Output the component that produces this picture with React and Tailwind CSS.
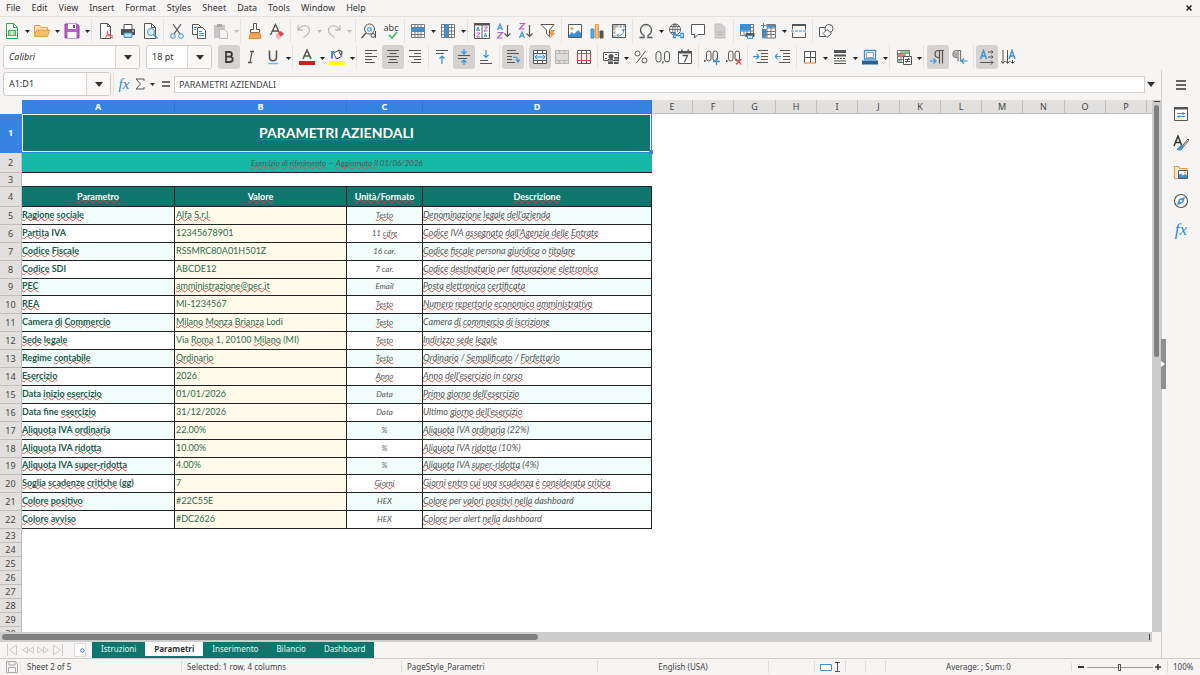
import { useState } from "react";

const menus = ["File", "Edit", "View", "Insert", "Format", "Styles", "Sheet", "Data", "Tools", "Window", "Help"];

const columns = [
  { name: "A", width: 153 },
  { name: "B", width: 172 },
  { name: "C", width: 76 },
  { name: "D", width: 229 },
  { name: "E", width: 41 },
  { name: "F", width: 41 },
  { name: "G", width: 42 },
  { name: "H", width: 41 },
  { name: "I", width: 41 },
  { name: "J", width: 42 },
  { name: "K", width: 41 },
  { name: "L", width: 41 },
  { name: "M", width: 41 },
  { name: "N", width: 42 },
  { name: "O", width: 41 },
  { name: "P", width: 41 },
];

// A leading ~ marks a word that the spell checker underlines
const rows = [
  ["~Ragione ~sociale", "~Alfa ~S.r.l.", "~Testo", "~Denominazione ~legale ~dell'azienda"],
  ["~Partita IVA", "12345678901", "11 ~cifre", "~Codice IVA ~assegnato ~dall'Agenzia ~delle ~Entrate"],
  ["~Codice ~Fiscale", "RSSMRC80A01H501Z", "16 car.", "~Codice ~fiscale persona ~giuridica o ~titolare"],
  ["~Codice SDI", "ABCDE12", "7 car.", "~Codice ~destinatario per ~fatturazione ~elettronica"],
  ["~PEC", "~amministrazione@pec.it", "Email", "~Posta ~elettronica ~certificata"],
  ["~REA", "MI-1234567", "~Testo", "~Numero ~repertorio ~economico ~amministrativo"],
  ["Camera ~di ~Commercio", "~Milano ~Monza ~Brianza Lodi", "~Testo", "Camera ~di ~commercio ~di ~iscrizione"],
  ["~Sede ~legale", "Via ~Roma 1, 20100 ~Milano (MI)", "~Testo", "~Indirizzo ~sede ~legale"],
  ["Regime ~contabile", "~Ordinario", "~Testo", "~Ordinario / ~Semplificato / ~Forfettario"],
  ["~Esercizio", "2026", "~Anno", "~Anno ~dell'esercizio in ~corso"],
  ["Data ~inizio ~esercizio", "01/01/2026", "Data", "~Primo ~giorno ~dell'esercizio"],
  ["Data fine ~esercizio", "31/12/2026", "Data", "Ultimo ~giorno ~dell'esercizio"],
  ["~Aliquota IVA ~ordinaria", "22.00%", "%", "~Aliquota IVA ~ordinaria (22%)"],
  ["~Aliquota IVA ~ridotta", "10.00%", "%", "~Aliquota IVA ~ridotta (10%)"],
  ["~Aliquota IVA ~super-ridotta", "4.00%", "%", "~Aliquota IVA ~super-ridotta (4%)"],
  ["~Soglia ~scadenze ~critiche (gg)", "7", "~Giorni", "~Giorni ~entro ~cui ~una ~scadenza ~è ~considerata ~critica"],
  ["~Colore ~positivo", "#22C55E", "HEX", "~Colore per ~valori ~positivi ~nella dashboard"],
  ["~Colore ~avviso", "#DC2626", "HEX", "~Colore per alert ~nella dashboard"],
];

const dataRowHeights = [18, 18, 18, 18, 17, 18, 18, 18, 18, 18, 18, 18, 18, 18, 17, 18, 18, 18];
const emptyRows = [23, 24, 25, 26, 27, 28, 29, 30];

const G = "#555555";
const B = "#3a92d4";
const M = "#b55bc4";
const R = "#e0474c";
const O = "#ed9a45";

const icons = {
  newDoc: (
    <>
      <path d="M2.5 .5h7l4 4v11h-11z" fill="#fff" stroke="#2fa84f" />
      <path d="M9.5 .5v4h4" fill="none" stroke="#2fa84f" />
      <path d="M4 7h8v6H4z" fill="#3cb45c" />
      <path d="M5 9h6M5 11h6M8 8v4" stroke="#fff" />
    </>
  ),
  open: (
    <>
      <path d="M.5 13.5v-11h5l1.5 2h6.500v3" fill="#fbe3c0" stroke={O} />
      <path d="M.5 13.500l2-6.500h13l-2 6.500z" fill="#f7bd78" stroke={O} />
    </>
  ),
  save: (
    <>
      <path d="M1 1h12l2 2v12H1z" fill="#b660c8" stroke="#8f3fa4" />
      <path d="M4 1h8v5H4zM3.500 9h9v6h-9z" fill="#fff" />
      <path d="M9 2h2v3H9z" fill="#8f3fa4" />
    </>
  ),
  pdf: (
    <>
      <path d="M2.5 .5h7l3 3v12h-10z" fill="#fff" stroke={G} />
      <path d="M9.5 .5v3h3" fill="none" stroke={G} />
      <path d="M7 15c2-2 3-5 2.500-7M8 13.500c2-2 5-2 7-.5M9 9c1 3 3 5 6 6" fill="none" stroke={R} />
    </>
  ),
  print: (
    <>
      <path d="M4 1.500h8v5H4z" fill="#fff" stroke={G} />
      <path d="M1 6h14v6H1z" fill="#4f5357" />
      <path d="M4 10h8v4.500H4z" fill="#bfe0f5" stroke={B} />
      <path d="M12 8h2" stroke="#fff" />
    </>
  ),
  preview: (
    <>
      <path d="M2.500 .5h7l4 4v11h-11z" fill="#fff" stroke={G} />
      <path d="M9.500 .5v4h4" fill="none" stroke={G} />
      <circle cx="9" cy="9" r="3.500" fill="#d9edf9" stroke={B} />
      <path d="M11.500 11.500l4 4" stroke={B} strokeWidth="1.500" />
    </>
  ),
  cut: (
    <>
      <path d="M4 1l7 10M12 1L5 11" fill="none" stroke={G} strokeWidth="1.300" />
      <circle cx="4" cy="13" r="2.300" fill="none" stroke={B} />
      <circle cx="12" cy="13" r="2.300" fill="none" stroke={B} />
    </>
  ),
  copy: (
    <>
      <path d="M1.500 1.500h6l3 3v7h-9z" fill="#fff" stroke={G} />
      <path d="M6.500 4.500h5l3 3v8h-8z" fill="#fff" stroke={G} />
      <path d="M3 4.500h3M3 6.500h2M8 8.500h3M8 10.500h5M8 12.500h5" stroke={B} />
    </>
  ),
  paste: (
    <>
      <path d="M1 2h11v13H1z" fill="#c9c8c6" />
      <path d="M4 1h5v3H4z" fill="#aaa" />
      <path d="M6.500 6.500h5l3 3v6h-8z" fill="#f4f4f4" stroke="#bbb" />
    </>
  ),
  brush: (
    <>
      <path d="M6.500 .5h3v6h3v3h-9v-3h3z" fill="#fff" stroke={G} />
      <path d="M3.500 10h9.500l1 5.500H2z" fill="#f3a659" stroke="#e58c33" />
    </>
  ),
  clear: (
    <>
      <path d="M1.500 12L6.500 1.500 11 11M3.500 8h6" fill="none" stroke={G} strokeWidth="1.400" />
      <path d="M7 12l5-4 3 3-5 4.500H8z" fill={R} />
      <path d="M7 12l2-1.500 3 3-2 2H8z" fill="#f7b6b8" />
    </>
  ),
  undo: <path d="M2 2v5h5M2.500 6.500c3-5 11-5 11 1 0 3-3 5-6 7" fill="none" stroke="#bdbcba" strokeWidth="1.300" />,
  redo: <path d="M14 2v5H9M13.500 6.500c-3-5-11-5-11 1 0 3 3 5 6 7" fill="none" stroke="#bdbcba" strokeWidth="1.300" />,
  find: (
    <>
      <circle cx="8.500" cy="6" r="5" fill="#eef7fc" stroke={G} />
      <path d="M5 10l-4.500 5" stroke={G} strokeWidth="1.400" />
      <circle cx="8" cy="6.500" r="1.700" fill="none" stroke={B} />
      <path d="M10 4.500V8.500" stroke={B} />
      <circle cx="12" cy="12.500" r="2" fill="none" stroke={G} />
      <path d="M14.500 8v7" stroke={G} />
    </>
  ),
  tableRow: (
    <>
      <path d="M1.500 1.500h13v13h-13z" fill="#fff" />
      <path d="M1.500 1.500h13v13h-13zM1.500 4.500h13M1.500 8.500h13M1.500 11.500h13M5 1.500v13M8 1.500v13M11 1.500v13" fill="none" stroke="#777" />
      <path d="M1 5h14v3.500H1z" fill={B} />
    </>
  ),
  tableCol: (
    <>
      <path d="M1.500 1.500h13v13h-13z" fill="#fff" />
      <path d="M1.500 1.500h13v13h-13zM1.500 4.500h13M1.500 8h13M1.500 11.500h13M4.500 1.500v13M8.500 1.500v13M11.500 1.500v13" fill="none" stroke="#777" />
      <path d="M5 1h3.500v14H5z" fill={B} />
    </>
  ),
  sort: (
    <>
      <path d="M.5 .5h15v15H.5zM8 .5v15" fill="#fff" stroke={G} />
      <path d="M0 0h16v2.500H0z" fill={G} />
      <path d="M2.500 8l1.500-4 1.500 4M3 7h2M10 14l1.500-4 1.500 4M10.500 13h2" fill="none" stroke={B} />
      <path d="M2.500 10H6l-3.500 4H6M10 4h3.500L10 8h3.500" fill="none" stroke={M} />
    </>
  ),
  sortAsc: (
    <>
      <path d="M1.500 7L4 1l2.500 6M2.500 5h3" fill="none" stroke={B} strokeWidth="1.200" />
      <path d="M1.500 9.500h5l-5 5.500h5" fill="none" stroke={M} strokeWidth="1.200" />
      <path d="M11.500 2v11M8.500 10.500l3 3 3-3" fill="none" stroke={G} strokeWidth="1.200" />
    </>
  ),
  sortDesc: (
    <>
      <path d="M1.500 .5h5l-5 5.500h5" fill="none" stroke={M} strokeWidth="1.200" />
      <path d="M1.500 15L4 9l2.500 6M2.500 13h3" fill="none" stroke={B} strokeWidth="1.200" />
      <path d="M11.500 2v11M8.500 10.500l3 3 3-3" fill="none" stroke={G} strokeWidth="1.200" />
    </>
  ),
  filter: (
    <>
      <path d="M1 1.500h13L9.500 7v6.500l-3-2.500V7z" fill="#fff" stroke={G} />
      <path d="M11 7h4l-2 3h2.500L9 16l2-4.500H9z" fill={O} />
    </>
  ),
  image: (
    <>
      <path d="M1.500 1.500h13v13h-13z" fill="#fff" stroke={G} />
      <circle cx="5" cy="5.500" r="1.500" fill={O} />
      <path d="M2 14v-2l3-3 2 2 4-4 3 3v4z" fill={B} />
    </>
  ),
  chart: (
    <>
      <path d="M2 6h3v9H2z" fill="#5aaade" stroke={B} />
      <path d="M6.500 1.500h3v13.500h-3z" fill="#f6c07a" stroke={O} />
      <path d="M11 8h3v7h-3z" fill={G} stroke={G} />
    </>
  ),
  pivot: (
    <>
      <path d="M1 1h14v3.500H1zM1 1h3.500v14H1z" fill="#b5b5b5" />
      <path d="M5 5h9.500v9.500H5z" fill="#fff" />
      <path d="M1.500 8h3M1.500 11.500h3M8 1.500v3M11.500 1.500v3" stroke="#fff" />
      <path d="M1.500 1.500h13v13h-13z" fill="none" stroke={G} />
      <path d="M6 12.500c4 1 7-2 6.500-6M11 8l1.500-2 2 1.500M8 10.500l-2 2 2 2" fill="none" stroke={B} />
    </>
  ),
  omega: <path d="M1.500 14.500H6v-2C3.500 11 2.500 9 2.500 7a5.500 5.500 0 0111 0c0 2-1 4-3.500 5.500v2h4.500" fill="none" stroke={G} strokeWidth="1.300" />,
  link: (
    <>
      <circle cx="7" cy="6.500" r="5.500" fill="#fff" stroke={G} />
      <path d="M1.500 6.500h11M2.500 3.500h9M2.500 9.500h5M7 1v9M7 1c-3 2-3 8-1 10M7 1c3 2 3 5 2.500 8" fill="none" stroke={G} strokeWidth=".8" />
      <path d="M8 10.500H5.500v4H8M12 10.500h3.500v4H12M7.500 12.500h6" fill="none" stroke={B} strokeWidth="1.300" />
    </>
  ),
  comment: <path d="M1.500 1.500h13v10H8l-3.500 3.500v-3.500h-3z" fill="#fff" stroke={G} />,
  note: (
    <>
      <path d="M3 1h6.500L13 4.500V15H3z" fill="#d0cfcd" stroke="#c4c3c1" />
      <path d="M5 9h6M5 11.500h6" stroke="#b4b4b4" />
    </>
  ),
  printRange: (
    <>
      <path d="M1.500 1.500h13v12h-13z" fill="#fff" />
      <path d="M1.500 1.500h13v11h-13zM1.500 4.500h13M1.500 8h13M5 1.500v11M8 1.500v11M11.500 1.500v11" fill="none" stroke="#777" />
      <path d="M1 1h10v3H1zM1 5h10v2.500H1z" fill={B} />
      <path d="M6.500 10h9v4h-9z" fill={G} />
      <path d="M8.500 12.500h5v3h-5z" fill="#cfe7f6" stroke={B} />
    </>
  ),
  freeze: (
    <>
      <path d="M1.500 3.500h13v12h-13z" fill="#fff" />
      <path d="M1.500 5.500v9.500h13V1.500h-9M1.500 8.500h13M1.500 11.500h13M6 1.500v13.500M10 1.500v13.500M6 5h8.500" fill="none" stroke="#777" />
      <path d="M6 2h8v2.500H6zM2 6h3.500v2H2zM2 9h3.500v2H2zM2 12h3.500v2.500H2z" fill={B} />
      <path d="M2.500 0v5M0 2.500h5" stroke={B} />
    </>
  ),
  split: (
    <>
      <path d="M1.500 1.500h13v5M1.500 1.500v5M1.500 9.500v5h13v-5" fill="none" stroke={G} />
      <path d="M1 1h14v2H1z" fill={G} />
      <path d="M0 8h16" stroke={B} strokeDasharray="3 1" />
    </>
  ),
  shapes: (
    <>
      <path d="M1.500 4.500h8v9h-8z" fill="#fff" stroke={G} />
      <circle cx="11" cy="5.500" r="4" fill="#fff" stroke={G} />
      <path d="M9 6.500l4.500 4-4.500 4-4-4z" fill="#fff" stroke={G} />
    </>
  ),
  bold: <path d="M5 3h3.500a2.300 2.300 0 010 4.700H5zM5 7.700h4a2.600 2.600 0 010 5.300H5z" fill="none" stroke="#3a3a3a" strokeWidth="1.800" />,
  italic: <path d="M7 2.500h4M5 13.500h4M9 2.500L7 13.500" fill="none" stroke={G} strokeWidth="1.300" />,
  underline: (
    <>
      <path d="M4.500 1.500v6.500c0 5 7 5 7 0V1.500" fill="none" stroke={G} strokeWidth="1.600" />
      <path d="M3 14.500h10" stroke="#7fb8e4" strokeWidth="1.500" />
    </>
  ),
  fontColor: (
    <>
      <path d="M4 10L8 1l4 9M5.500 7h5" fill="none" stroke={G} strokeWidth="1.600" />
      <path d="M0 12h16v4H0z" fill="#c9211e" />
    </>
  ),
  highlight: (
    <>
      <path d="M4.500 4l5-2.500 3 6-5 2.500z" fill="#fff" stroke={G} />
      <path d="M2 9.500V2h4L4 4v5.500z" fill={B} />
      <path d="M9 1l4 1.500-.5 4" fill="none" stroke={G} strokeWidth="1.200" />
      <path d="M0 12h16v4H0z" fill="#ffff00" />
    </>
  ),
  left: <path d="M2 1.500h12M2 4.500h7M2 7.500h12M2 10.500h7M2 13.500h10" stroke={G} />,
  center: <path d="M2 1.500h12M4.500 4.500h7M2 7.500h12M4.500 10.500h7M3 13.500h10" stroke={G} />,
  right: <path d="M2 1.500h12M7 4.500h7M2 7.500h12M7 10.500h7M4 13.500h10" stroke={G} />,
  top: (
    <>
      <path d="M2 1.500h12M2 4.500h8" stroke={G} />
      <path d="M8 15V7M5.500 9.500L8 7l2.500 2.500" fill="none" stroke={B} strokeWidth="1.200" />
    </>
  ),
  middle: (
    <>
      <path d="M2 6.500h12M2 9.500h9" stroke={G} />
      <path d="M8 0v5M5.500 2.500L8 5l2.500-2.500M8 16v-5M5.500 13.500L8 11l2.500 2.500" fill="none" stroke={B} strokeWidth="1.200" />
    </>
  ),
  bottom: (
    <>
      <path d="M2 11.500h8M2 14.500h12" stroke={G} />
      <path d="M8 1v7M5.500 6L8 8.500 10.500 6" fill="none" stroke={B} strokeWidth="1.200" />
    </>
  ),
  wrap: (
    <>
      <path d="M2 1.500h9M2 4.500h12M2 7.500h5M2 10.500h5M2 13.500h8" stroke={G} />
      <path d="M8 8.500c3-1 5 0 5 4M11 10.500l2 2.500 2-2.500" fill="none" stroke={B} strokeWidth="1.200" />
    </>
  ),
  merge: (
    <>
      <path d="M1.500 1.500h13v13h-13z" fill="#fff" />
      <path d="M1 5h14v6H1z" fill="#d5eaf8" />
      <path d="M1.500 1.500h13v13h-13zM1.500 4.500h13M1.500 11.500h13M5.500 1.500v3M10.500 1.500v3M5.500 11.500v3M10.500 11.500v3" fill="none" stroke={G} />
      <path d="M3 8h10M5 6L3 8l2 2M11 6l2 2-2 2" fill="none" stroke={B} />
    </>
  ),
  mergeOff: <path d="M1.500 1.500h13v13h-13zM1.500 4.500h13M1.500 11.500h13M5.500 1.500v3M10.500 1.500v3M5.500 11.500v3M10.500 11.500v3" fill="#dddcda" stroke="#b5b4b2" />,
  unmerge: (
    <>
      <path d="M1.500 1.500h13v13h-13zM1.500 4.500h13M1.500 11.500h13M5.500 1.500v13M10.500 1.500v13" fill="#fff" stroke={G} />
      <path d="M1 4.500h14M1 11.500h14M1.500 5v6M5.500 5v6M10.500 5v6M14.500 5v6" stroke={R} strokeWidth="1.200" />
    </>
  ),
  currency: (
    <>
      <path d="M.5 3.500h15v8H.5z" fill="#fff" stroke={G} />
      <circle cx="8" cy="7.500" r="2.500" fill={G} />
      <path d="M2 5.500h2M12 5.500h2M2 9.500h2" stroke={G} />
      <path d="M5 10h5v5H5zM11 8h4.500v7H11z" fill={G} />
      <path d="M5 12h5M11 10h4M11 12.500h4" stroke="#ddd" />
    </>
  ),
  percent: (
    <>
      <circle cx="4.500" cy="4.500" r="2.500" fill="none" stroke={G} />
      <circle cx="11.500" cy="11.500" r="2.500" fill="none" stroke={G} />
      <path d="M12.500 2L3.500 14" stroke={G} />
    </>
  ),
  decimal: (
    <>
      <rect x="1" y="2.500" width="5" height="10.500" rx="2.500" fill="none" stroke={G} />
      <rect x="9.500" y="2.500" width="5" height="10.500" rx="2.500" fill="none" stroke={G} />
      <path d="M7.200 12h1.300v2.500H7.200z" fill={G} />
    </>
  ),
  date: (
    <>
      <path d="M1.500 2.500h13v12h-13z" fill="#fff" stroke={G} />
      <path d="M1 2h14v2.500H1zM4 .5h1.500V3H4zM10.500 .5H12V3h-1.500z" fill={G} />
      <path d="M5.500 6.500h5l-3 6.500" fill="none" stroke={G} strokeWidth="1.300" />
    </>
  ),
  addDecimal: (
    <>
      <rect x="2.500" y="2" width="4.500" height="10" rx="2.200" fill="none" stroke={G} />
      <rect x="9" y="2" width="4.500" height="10" rx="2.200" fill="none" stroke={G} />
      <path d="M0 11h1.500v2H0z" fill={G} />
      <path d="M12.500 9v7M9 12.500h7" stroke={B} strokeWidth="1.300" />
    </>
  ),
  delDecimal: (
    <>
      <rect x="2.500" y="2" width="4.500" height="10" rx="2.200" fill="none" stroke={G} />
      <rect x="9" y="2" width="4.500" height="10" rx="2.200" fill="none" stroke={G} />
      <path d="M0 11h1.500v2H0z" fill={G} />
      <path d="M10 10l5.500 5.500M15.500 10L10 15.500" stroke={R} strokeWidth="1.300" />
    </>
  ),
  indent: (
    <>
      <path d="M5 1.500h10M8 4.500h7M8 7.500h7M8 10.500h7M4 13.500h11" stroke={G} />
      <path d="M0 7.500h6M3.500 5L6 7.500 3.500 10" fill="none" stroke={B} strokeWidth="1.200" />
    </>
  ),
  outdent: (
    <>
      <path d="M5 1.500h10M8 4.500h7M8 7.500h7M8 10.500h7M4 13.500h11" stroke={G} />
      <path d="M6 7.500H0M2.500 5L0 7.500 2.500 10" fill="none" stroke={B} strokeWidth="1.200" />
    </>
  ),
  borders: (
    <>
      <path d="M2 2.500h12v11.500H2z" fill="#fff" />
      <path d="M2 2.500h12M2.500 2v12M13.500 2v12M8.500 2v12M2 8.500h12" fill="none" stroke={G} />
      <path d="M2 14h12" stroke={O} strokeWidth="1.300" />
    </>
  ),
  lineStyle: (
    <>
      <path d="M2 2.500h12" stroke={G} strokeWidth="3" />
      <path d="M2 6.500h12" stroke={G} strokeWidth="2" />
      <path d="M2 9.500h12" stroke={G} strokeDasharray="2 1" />
      <path d="M2 12h12M2 14.500h12" stroke={G} />
    </>
  ),
  frameColor: (
    <>
      <path d="M2.500 1.500h11v8.500h-11z" fill="#fff" stroke={B} strokeWidth="1.300" />
      <path d="M4.500 3.500h7v5h-7z" fill="none" stroke="#999" />
      <path d="M0 11.500h16v4H0z" fill="#2a6099" />
    </>
  ),
  conditional: (
    <>
      <path d="M1.500 1.500h12v12h-12z" fill="#fff" />
      <path d="M1.500 1.500h12v12h-12zM1.500 4.500h12M1.500 7.500h12M1.500 10.500h12M5 1.500v12M9 1.500v12" fill="none" stroke="#777" />
      <path d="M5.500 2H13v2.500H5.500zM2 11h3v2H2z" fill="#7fcf8d" />
      <path d="M2 5h7v2.500H2z" fill="#ef7b7d" />
      <path d="M7.500 7.500h8v8h-8z" fill="#fff" stroke={G} />
      <path d="M9 10.500h5M9 12.500h5M13 9l-3 5" stroke={G} />
    </>
  ),
  ltr: (
    <>
      <path d="M14 1.500H8.500a3.500 3.500 0 000 7H9M9.500 1.500v13M12.500 1.500v13" fill="none" stroke={G} strokeWidth="1.200" />
      <path d="M0 12h6M3.500 9.500L6 12l-2.500 2.500" fill="none" stroke={B} strokeWidth="1.200" />
    </>
  ),
  rtl: (
    <>
      <path d="M9 1.500H4.500a3.500 3.500 0 000 7H5M6 1.500v11M8.500 1.500v11" fill="none" stroke="#777" strokeWidth="1.200" />
      <path d="M1.500 3h4v5h-3z" fill="#aaa" />
      <path d="M15.500 12h-6M12 9.500L9.500 12l2.500 2.500" fill="none" stroke={B} strokeWidth="1.200" />
    </>
  ),
  textH: (
    <>
      <path d="M1.500 10L4.500 1.500 7.500 10M2.500 7h4" fill="none" stroke={B} strokeWidth="1.400" />
      <path d="M9 3h5M9 8h5M1 13.500h13M12.500 1.500L14 3l-1.500 1.500M12.500 6.500L14 8l-1.500 1.500M12 11.500l2 2-2 2" fill="none" stroke={G} />
    </>
  ),
  textV: (
    <>
      <path d="M8 10L11 1.500 14 10M9 7h4" fill="none" stroke={B} strokeWidth="1.400" />
      <path d="M2 1v13M6.500 1v13M0 12l2 2.500L4 12M4.500 12l2 2.500 2-2.500M11.500 11v3M9.500 12.500l2 2 2-2" fill="none" stroke={G} />
    </>
  ),
  properties: (
    <>
      <path d="M1.500 1.500h13v13h-13z" fill="#fff" stroke={G} />
      <path d="M1 1h14v2.500H1z" fill={G} />
      <path d="M4 7.500h8M4 10.500h8M10 6v3M6 9v3" stroke={B} />
    </>
  ),
  styles: (
    <>
      <path d="M1 11L5 1l3.500 9M2.500 7.500h5" fill="none" stroke="#333" strokeWidth="1.500" />
      <path d="M15 4l-5 6-1 2 2-1 5-6z" fill="#fff" stroke={G} />
      <path d="M4 14c2 0 2-3.500 5-3.500l1 1.500c0 3-4 4-6 2z" fill={B} stroke={B} />
    </>
  ),
  gallery: (
    <>
      <path d="M1.500 14.500v-12h4l1.500 2h7v3" fill="#fdebd3" stroke={O} strokeWidth="1.200" />
      <path d="M1.500 14.500h4" stroke={O} strokeWidth="1.200" />
      <path d="M5.500 6.500h9v8h-9z" fill="#fff" stroke={G} />
      <circle cx="12" cy="8.500" r="1" fill={O} />
      <path d="M6 14v-3l2-1.500 2 2 2-1.500 2 1.500v2.500z" fill={B} />
    </>
  ),
  navigator: (
    <>
      <circle cx="8" cy="8" r="6.500" fill="#fff" stroke={G} strokeWidth="1.200" />
      <path d="M12 4l-2 6-6 2 2-6z" fill={B} />
      <circle cx="8" cy="8" r="1.200" fill="#fff" />
    </>
  ),
};

const standardBar = [
  ["newDoc", "New", "menu"], ["open", "Open", "menu"], ["save", "Save", "menu"], "tight",
  ["pdf", "Export as PDF"], ["print", "Print"], ["preview", "Print Preview"], "sep",
  ["cut", "Cut"], ["copy", "Copy"], ["paste", "Paste", "menuOff"], "tight",
  ["brush", "Clone Formatting"], ["clear", "Clear Formatting"], "sep",
  ["undo", "Undo", "menuOff"], ["redo", "Redo", "menuOff"], "sep",
  ["find", "Find and Replace"], ["spell", "Spelling"], "sep",
  ["tableRow", "Row", "menu"], ["tableCol", "Column", "menu"], "tight",
  ["sort", "Sort"], ["sortAsc", "Sort Ascending"], ["sortDesc", "Sort Descending"], ["filter", "AutoFilter"], "sep",
  ["image", "Insert Image"], ["chart", "Insert Chart"], ["pivot", "Pivot Table"], "sep",
  ["omega", "Special Character", "menu"], ["link", "Hyperlink"], ["comment", "Comment"], ["note", "Headers and Footers"], "sep",
  ["printRange", "Print Area"], ["freeze", "Freeze", "menu"], ["split", "Split Window"], "sep",
  ["shapes", "Draw Functions"],
];

const formatBar = [
  ["bold", "Bold", "", true], ["italic", "Italic"], ["underline", "Underline", "menu"], "tight",
  ["fontColor", "Font Color", "menu"], ["highlight", "Background Color", "menu"], "tight",
  ["left", "Align Left"], ["center", "Center Horizontally", "", true], ["right", "Align Right"], "sep",
  ["top", "Align Top"], ["middle", "Center Vertically", "", true], ["bottom", "Align Bottom"], "sep",
  ["wrap", "Wrap Text", "", true], "sep",
  ["merge", "Merge and Center", "", true], ["mergeOff", "Merge Cells"], ["unmerge", "Unmerge Cells"], "sep",
  ["currency", "Currency", "menu"], ["percent", "Percent"], ["decimal", "Number"], ["date", "Date"], "sep",
  ["addDecimal", "Add Decimal Place"], ["delDecimal", "Delete Decimal Place"], "sep",
  ["indent", "Increase Indent"], ["outdent", "Decrease Indent"], "sep",
  ["borders", "Borders", "menu"], ["lineStyle", "Border Style", "menu"], ["frameColor", "Border Color", "menu"], "tight",
  ["conditional", "Conditional", "menu"], "tight",
  ["ltr", "Left-To-Right", "", true], ["rtl", "Right-To-Left"], "sep",
  ["textH", "Text Horizontal", "", true], ["textV", "Text Vertical"],
];

const sheets = ["Istruzioni", "Parametri", "Inserimento", "Bilancio", "Dashboard"];

const sideItems = [["properties", "Properties"], ["styles", "Styles"], ["gallery", "Gallery"], ["navigator", "Navigator"]];

function Icon({ name }) {
  if (name === "spell") {
    return (
      <span className="relative block h-4 text-[9px] leading-[9px] text-[#444]">
        abc
        <svg className="absolute right-0 bottom-0 h-2 w-2.5" viewBox="0 0 10 8">
          <path d="M1 4l3 3 5-6" fill="none" stroke="#3cb45c" strokeWidth="1.500" />
        </svg>
      </span>
    );
  }
  return <svg className="h-4 w-4 shrink-0" viewBox="0 0 16 16">{icons[name]}</svg>;
}

function Caret({ className = "h-[3px] w-[5px]" }) {
  return (
    <svg className={className} viewBox="0 0 5 3">
      <path d="M0 0h5L2.500 3z" fill="currentColor" />
    </svg>
  );
}

function Toolbar({ items }) {
  return items.map((item, i) => {
    if (item === "sep") return <span key={i} className="mx-0.5 h-6 w-px shrink-0 bg-[#e6e4e2]" />;
    if (item === "tight") return <span key={i} className="mr-[3px] h-6 w-px shrink-0 bg-[#e6e4e2]" />;
    const [icon, label, menu, pressed] = item;
    return (
      <span key={i} className="flex shrink-0 items-center">
        <button aria-label={label} aria-pressed={pressed} className={`flex h-6 w-[22px] items-center justify-center rounded-[3px] ${pressed ? "bg-[#d5d2cf]" : ""}`}>
          <Icon name={icon} />
        </button>
        {menu && (
          <button aria-label={`${label} options`} className={`flex h-6 w-2 items-center justify-center pt-0.5 ${menu === "menuOff" ? "text-[#bbb]" : "text-[#222]"}`}>
            <Caret />
          </button>
        )}
      </span>
    );
  });
}

function Combo({ label, value, inputClass }) {
  return (
    <div className="flex h-6 shrink-0 overflow-hidden rounded-[3px] border border-[#cfccc9] bg-white">
      <input aria-label={label} defaultValue={value} className={`px-[5px] text-[9px] text-[#333] outline-none ${inputClass}`} />
      <button aria-label={`${label} list`} className="flex w-6 items-center justify-center border-l border-[#dddad7] bg-[#f9f8f7] text-[#333]">
        <Caret className="h-[5px] w-2" />
      </button>
    </div>
  );
}

function Words({ text }) {
  return text.split(" ").map((word, i) => (
    <span key={i}>
      {i > 0 && " "}
      {word.startsWith("~") ? (
        <span className="underline decoration-[#dc4743] decoration-wavy decoration-1 -underline-offset-1 [text-decoration-skip-ink:none]">{word.slice(1)}</span>
      ) : word}
    </span>
  ));
}

function RowHead({ n, selected }) {
  return (
    <th scope="row" className={`border-r border-b p-0 text-[9px] leading-3 ${selected ? "border-[#3584e4] bg-[#3584e4] font-bold text-white" : "border-[#c0bfbd] bg-[#e1e0de] font-normal text-[#444]"}`}>
      {n}
    </th>
  );
}

function Sheet() {
  return (
    <table className="w-full table-fixed border-separate border-spacing-0 bg-white">
      <colgroup>
        <col className="w-[22px]" />
        {columns.map((c) => <col key={c.name} style={{ width: c.width }} />)}
        <col />
      </colgroup>
      <thead>
        <tr className="h-3.5">
          <th className="bg-[#f6f5f4] p-0" />
          {columns.map((c, i) => (
            <th key={c.name} scope="col" className={`border-r border-b p-0 text-[9px] leading-3 ${i < 4 ? "border-[#2f78d2] bg-[#3584e4] font-bold text-white" : "border-[#c0bfbd] bg-[#e1e0de] font-normal text-[#444]"}`}>
              {c.name}
            </th>
          ))}
          <th className="border-b border-[#c0bfbd] bg-[#e1e0de] p-0" />
        </tr>
      </thead>
      <tbody className="font-[Lato,sans-serif] [&_th]:font-['Noto_Sans',sans-serif]">
        <tr className="h-[39px]">
          <RowHead n={1} selected />
          <td colSpan={4} className="relative border-r border-b border-[#3584e4] bg-[#0f766e] p-0 text-center text-[14px] leading-5 font-bold text-white shadow-[inset_0_0_0_1px_#fff]">
            <span className="underline decoration-[#c8423f] decoration-1 underline-offset-1">PARAMETRI</span>{" "}
            <span className="underline decoration-[#c8423f] decoration-1 underline-offset-1">AZIENDALI</span>
            <span className="absolute -right-0.5 -bottom-0.5 h-1 w-1 bg-[#3584e4]" />
          </td>
          <td colSpan={13} />
        </tr>
        <tr className="h-5">
          <RowHead n={2} />
          <td colSpan={4} className="border-b border-[#222] bg-[#14b8a6] p-0 text-center text-[8px] leading-3 text-[#555] italic">
            <Words text="~Esercizio ~di ~riferimento — ~Aggiornato ~il 01/06/2026" />
          </td>
          <td colSpan={13} />
        </tr>
        <tr className="h-3.5">
          <RowHead n={3} />
          <td colSpan={4} className="border-b border-[#222] p-0" />
          <td colSpan={13} />
        </tr>
        <tr className="h-5">
          <RowHead n={4} />
          {["~Parametro", "~Valore", "~Unità/Formato", "~Descrizione"].map((h) => (
            <td key={h} className="border-r border-b border-[#222] bg-[#0f766e] p-0 text-center text-[9px] leading-3 font-bold text-white">
              <Words text={h} />
            </td>
          ))}
          <td colSpan={13} />
        </tr>
        {rows.map(([name, value, unit, desc], i) => {
          const shade = i % 2 === 0 ? "bg-[#f0fdfa]" : "bg-white";
          return (
            <tr key={name} style={{ height: dataRowHeights[i] }}>
              <RowHead n={i + 5} />
              <td className={`border-r border-b border-[#222] p-0 pb-0.5 text-[9px] leading-3 font-bold whitespace-nowrap text-[#1c5a4c] ${shade}`}><Words text={name} /></td>
              <td className="border-r border-b border-[#222] bg-[#fffbeb] p-0 pb-0.5 pl-px text-[9px] leading-3 whitespace-nowrap text-[#2a6a4b]"><Words text={value} /></td>
              <td className={`border-r border-b border-[#222] p-0 pb-0.5 text-center text-[8px] leading-3 text-[#555] italic ${shade}`}><Words text={unit} /></td>
              <td className={`border-r border-b border-[#222] p-0 pb-0.5 text-[9px] leading-3 whitespace-nowrap text-[#555] italic ${shade}`}><Words text={desc} /></td>
              <td colSpan={13} />
            </tr>
          );
        })}
        {emptyRows.map((n) => (
          <tr key={n} className="h-3.5">
            <RowHead n={n} />
            <td colSpan={17} />
          </tr>
        ))}
      </tbody>
    </table>
  );
}

export default function App() {
  const [active, setActive] = useState("Parametri");

  return (
    <div className="flex h-screen flex-col overflow-hidden bg-[#f6f5f4] font-['Noto_Sans',sans-serif] text-[9px] leading-3 text-[#333]">
      <header className="flex h-[17px] shrink-0 items-center justify-between border-b border-[#e4e2e0] pr-2 pl-1.5">
        <nav className="flex gap-[11px]">
          {menus.map((m) => <button key={m}>{m}</button>)}
        </nav>
        <button aria-label="Close document">
          <svg className="h-1.5 w-1.5" viewBox="0 0 6 6"><path d="M.5 .5l5 5M5.500 .5l-5 5" stroke="#222" strokeWidth="1.500" /></svg>
        </button>
      </header>

      <div className="flex h-[27px] shrink-0 items-center pl-px">
        <Toolbar items={standardBar} />
      </div>
      <div className="flex h-[26px] shrink-0 items-center pl-[3px]">
        <Combo label="Font name" value="Calibri" inputClass="w-[111px] italic" />
        <span className="w-1.5" />
        <Combo label="Font size" value="18 pt" inputClass="w-10" />
        <span className="w-1.5" />
        <Toolbar items={formatBar} />
      </div>

      <div className="flex min-h-0 flex-1">
        <main className="flex min-w-0 flex-1 flex-col">
          <div className="flex h-[30px] shrink-0 items-center pr-1 pb-0.5 pl-[3px]">
            <Combo label="Name box" value="A1:D1" inputClass="w-[82px]" />
            <span className="ml-0.5 h-6 w-px bg-[#e6e4e2]" />
            <button aria-label="Function Wizard" className="w-5 font-['Liberation_Serif',serif] text-[15px] text-[#2f86cc] italic">fx</button>
            <button aria-label="Select Function" className="flex h-5 w-3 items-center justify-center">
              <svg className="h-3 w-2.5" viewBox="0 0 10 12"><path d="M9 3V1H1l4.500 5L1 11h8V9" fill="none" stroke="#555" /></svg>
            </button>
            <button aria-label="Select Function options" className="flex h-5 w-3 items-center justify-center"><Caret /></button>
            <button aria-label="Formula" className="flex h-5 w-4 items-center justify-center">
              <svg className="h-2 w-2" viewBox="0 0 8 8"><path d="M0 2h8M0 6h8" stroke="#444" strokeWidth="1.500" /></svg>
            </button>
            <input aria-label="Input line" defaultValue="PARAMETRI AZIENDALI" className="h-[17px] min-w-0 flex-1 border border-[#d5d2cf] bg-white px-1 text-[9px] text-[#444] outline-none" />
            <button aria-label="Expand Formula Bar" className="flex h-5 w-3 items-center justify-center"><Caret className="h-[5px] w-2" /></button>
          </div>

          <div className="flex min-h-0 flex-1">
            <div className="min-w-0 flex-1 overflow-hidden bg-white">
              <Sheet />
            </div>
            <div className="flex w-[9px] shrink-0 flex-col items-center bg-[#cdcdcd]">
              <span className="mt-px h-px w-1.5 bg-[#444]" />
              <span className="mt-[3px] h-[252px] w-[5px] rounded-full bg-[#808080]" />
            </div>
          </div>

          <div className="mr-[9px] flex h-2.5 shrink-0 items-center justify-between bg-[#cdcdcd] pr-0.5 pl-0.5">
            <span className="h-1.5 w-[536px] rounded-full bg-[#808080]" />
            <span className="h-1.5 w-px bg-[#444]" />
          </div>

          <div className="flex h-4 shrink-0 items-start text-[8px]">
            <div className="flex h-full w-[92px] items-center pl-1.5">
              {["M1 1v12M10 2L3 7l7 5z", "M6 4L1 7l5 3zM12 4L7 7l5 3z", "M1 4l5 3-5 3zM7 4l5 3-5 3z", "M2 2l7 5-7 5zM11 1v12"].map((d) => (
                <button key={d} aria-label="Scroll sheets" className="w-[15px]">
                  <svg className="h-3.5 w-3.5" viewBox="0 0 13 14"><path d={d} fill="none" stroke="#cfcdcb" /></svg>
                </button>
              ))}
              <button aria-label="Add sheet" className="ml-2 flex h-3.5 w-3 items-center justify-end border border-[#e0dedc] bg-white">
                <svg className="h-[5px] w-[5px]" viewBox="0 0 5 5"><circle cx="2.500" cy="2.500" r="1.700" fill="none" stroke="#2f6cc0" /></svg>
              </button>
            </div>
            <div role="tablist" className="flex h-full bg-[#0f766e]">
              {sheets.map((s) => (
                <button
                  key={s}
                  role="tab"
                  aria-selected={active === s}
                  onClick={() => setActive(s)}
                  className={active === s ? "h-3.5 bg-white px-[9px] font-bold text-[#333]" : "h-3.5 px-[9px] text-[#e6f4f2]"}
                >
                  {s}
                </button>
              ))}
            </div>
          </div>
        </main>

        <aside className="relative flex w-[39px] shrink-0 flex-col items-center gap-[13px] border-l border-[#cfccc9] pt-[7px]">
          <button aria-label="Sidebar Settings" className="flex h-4 items-center">
            <svg className="h-2.5 w-2.5" viewBox="0 0 10 10"><path d="M0 1h10M0 5h10M0 9h10" stroke="#333" strokeWidth="1.500" /></svg>
          </button>
          {sideItems.map(([icon, label]) => (
            <button key={icon} aria-label={label}><Icon name={icon} /></button>
          ))}
          <button aria-label="Functions" className="h-4 font-['Liberation_Serif',serif] text-[17px] leading-4 text-[#2f86cc] italic">fx</button>
          <button aria-label="Hide sidebar" className="absolute top-[269px] -left-px flex h-[50px] w-[5px] items-center bg-[#8e9192]">
            <svg className="h-1.5 w-1" viewBox="0 0 4 6"><path d="M0 0l4 3-4 3z" fill="#fff" /></svg>
          </button>
        </aside>
      </div>

      <footer className="flex h-[17px] shrink-0 items-center border-t border-[#d0cecb] text-[8px] text-[#444]">
        <div className="flex w-5 justify-center pl-1">
          <svg className="h-3 w-3" viewBox="0 0 12 12"><path d="M.5 .5h9l2 2v9H.5zM3 .5v3.500h6V.5M2.500 11.500v-5h7v5" fill="none" stroke="#aaa" /></svg>
        </div>
        <div className="w-[161px] border-l border-[#e0dedc] pl-1.5">Sheet 2 of 5</div>
        <div className="w-[220px] border-l border-[#e0dedc] pl-[5px]">Selected: 1 row, 4 columns</div>
        <div className="w-[196px] border-l border-[#e0dedc] pl-[5px]">PageStyle_Parametri</div>
        <div className="w-[171px] border-l border-[#e0dedc] text-center">English (USA)</div>
        <div className="h-3 w-[46px] border-l border-[#e0dedc]" />
        <div className="flex h-3 w-[31px] items-center justify-center gap-[3px] border-l border-[#e0dedc]">
          <svg className="h-[7px] w-3" viewBox="0 0 12 7"><path d="M.5 .5h11v6H.5z" fill="#fff" stroke={B} /></svg>
          <svg className="h-2.5 w-[5px]" viewBox="0 0 5 10"><path d="M0 .5h5M0 9.500h5M2.500 0v10" stroke={G} /></svg>
        </div>
        <div className="h-3 w-5 border-l border-[#e0dedc]" />
        <div className="h-3 w-5 border-l border-[#e0dedc]" />
        <div className="flex-1 border-l border-[#e0dedc] text-center">Average: ; Sum: 0</div>
        <div className="flex w-24 items-center justify-between border-l border-[#e0dedc] pr-1.5 pl-1.5">
          <button aria-label="Zoom out" className="h-0.5 w-1.5 bg-[#333]" />
          <input
            type="range"
            aria-label="Zoom"
            className="h-2 w-[66px] appearance-none bg-transparent [&::-webkit-slider-runnable-track]:h-px [&::-webkit-slider-runnable-track]:bg-[#999] [&::-webkit-slider-thumb]:-mt-[3px] [&::-webkit-slider-thumb]:h-[7px] [&::-webkit-slider-thumb]:w-[3px] [&::-webkit-slider-thumb]:appearance-none [&::-webkit-slider-thumb]:border [&::-webkit-slider-thumb]:border-[#555] [&::-webkit-slider-thumb]:bg-white"
          />
          <button aria-label="Zoom in">
            <svg className="h-1.5 w-1.5" viewBox="0 0 6 6"><path d="M0 3h6M3 0v6" stroke="#333" strokeWidth="1.500" /></svg>
          </button>
        </div>
        <div className="w-[33px] border-l border-[#e0dedc] pl-[5px]">100%</div>
      </footer>
    </div>
  );
}
